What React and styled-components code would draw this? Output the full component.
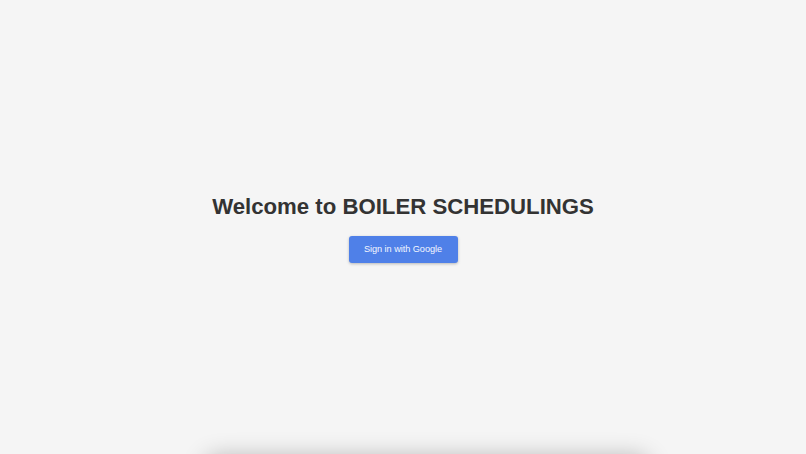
import React from 'react'
import styled, { createGlobalStyle } from 'styled-components'

const GlobalStyle = createGlobalStyle`
  html, body {
    margin: 0;
    padding: 0;
    background: #f5f5f5;
    font-family: "Liberation Sans", Arial, sans-serif;
    color: #333;
  }
`

const Page = styled.div`
  display: flex;
  flex-direction: column;
  align-items: center;
`

const Hero = styled.section`
  height: 454px;
  width: 100%;
  display: flex;
  flex-direction: column;
  align-items: center;
  justify-content: center;
  gap: 16px;
  padding-top: 2px;
  box-sizing: border-box;
`

const Title = styled.h1`
  margin: 0;
  font-size: 22.2px;
  font-weight: 700;
  color: #333;
`

const GoogleButton = styled.button`
  width: 109px;
  height: 27px;
  padding: 0;
  border: 0;
  border-radius: 3px;
  background: #4f80e8;
  color: #f4f7ff;
  font-family: "Liberation Sans", Arial, sans-serif;
  font-size: 9.2px;
  letter-spacing: -0.05px;
  cursor: pointer;
  box-shadow: 0 1px 3px rgba(0, 0, 0, 0.25);
`

const Panel = styled.div`
  width: 440px;
  height: 200px;
  margin-left: 48px;
  margin-top: 4px;
  background: #f5f5f5;
  border-radius: 8px;
  box-shadow: 0 0 24px rgba(0, 0, 0, 0.3);
`

export default function App() {
  return (
    <>
      <GlobalStyle />
      <Page>
        <Hero>
          <Title>Welcome to BOILER SCHEDULINGS</Title>
          <GoogleButton type="button">Sign in with Google</GoogleButton>
        </Hero>
        <Panel />
      </Page>
    </>
  )
}
